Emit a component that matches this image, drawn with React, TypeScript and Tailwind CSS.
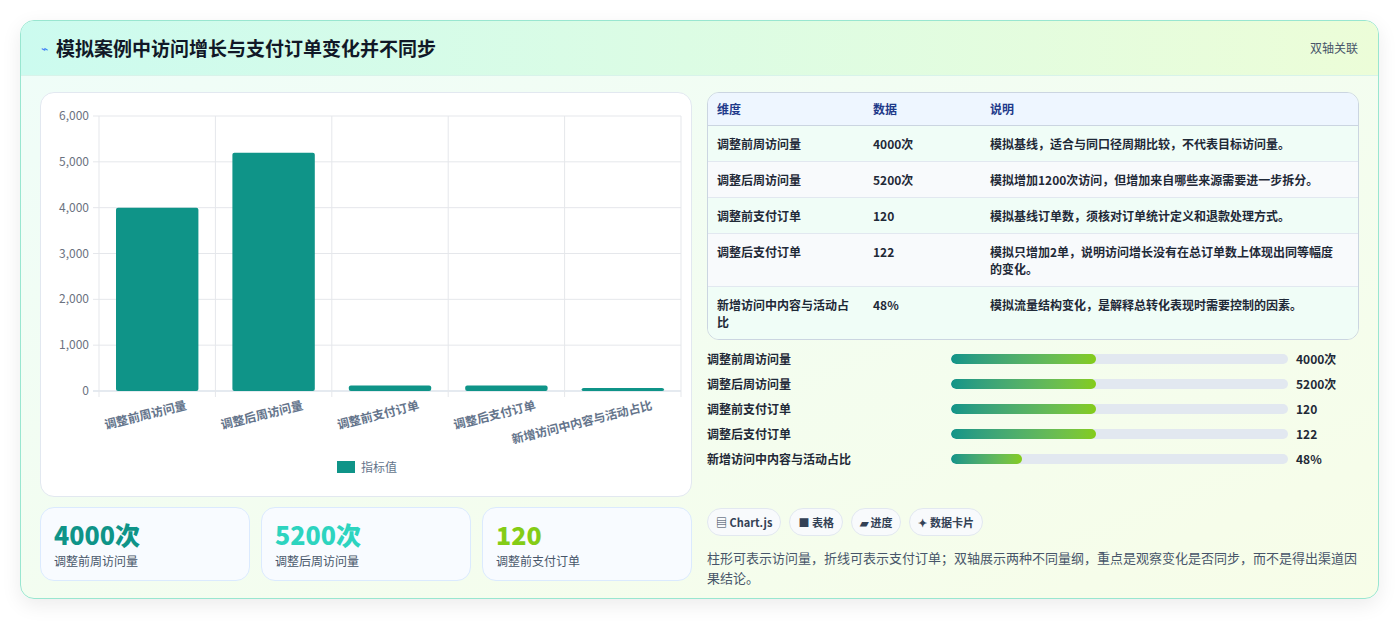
import React from "react";

const F = { fontFamily: '"Noto Sans CJK SC", "Noto Sans", sans-serif' };

const bars = [
  { l: "调整前周访问量", v: 4000 },
  { l: "调整后周访问量", v: 5200 },
  { l: "调整前支付订单", v: 120 },
  { l: "调整后支付订单", v: 122 },
  { l: "新增访问中内容与活动占比", v: 48 },
];

function Chart() {
  const L = 58, R = 640, T = 23, B = 298;
  const cw = (R - L) / 5;
  const y = (v: number) => B - ((B - T) * v) / 6000;
  return (
    <svg width="650" height="402" className="block">
      {[0, 1000, 2000, 3000, 4000, 5000, 6000].map((t) => (
        <g key={t}>
          <line x1={L - 6} x2={R} y1={y(t)} y2={y(t)} stroke={t === 0 ? "#cbd5e1" : "#e5e7eb"} />
          <text x={L - 10} y={y(t) + 4} textAnchor="end" fontSize="12" fill="#6b7280" style={F}>
            {t.toLocaleString("en-US")}
          </text>
        </g>
      ))}
      {[0, 1, 2, 3, 4, 5].map((i) => (
        <line key={i} x1={L + i * cw} x2={L + i * cw} y1={T} y2={B + 6} stroke="#e5e7eb" />
      ))}
      {bars.map((b, i) => {
        const x = L + i * cw + 17;
        const h = Math.max(B - y(b.v), 3);
        return (
          <g key={i}>
            <rect x={x} y={B - h} width={cw - 34} height={h} rx="2" fill="#0f9488" />
            <text
              x={L + i * cw + cw / 2 + 30}
              y={B + 18}
              textAnchor="end"
              fontSize="12"
              fontWeight="700"
              fill="#64748b"
              transform={`rotate(-14 ${L + i * cw + cw / 2 + 30} ${B + 18})`}
              style={F}
            >
              {b.l}
            </text>
          </g>
        );
      })}
      <rect x="296" y="368" width="18" height="12" fill="#0f9488" />
      <text x="320" y="379" fontSize="12" fill="#64748b" style={F}>指标值</text>
    </svg>
  );
}

const rows = [
  ["调整前周访问量", "4000次", "模拟基线，适合与同口径周期比较，不代表目标访问量。"],
  ["调整后周访问量", "5200次", "模拟增加1200次访问，但增加来自哪些来源需要进一步拆分。"],
  ["调整前支付订单", "120", "模拟基线订单数，须核对订单统计定义和退款处理方式。"],
  ["调整后支付订单", "122", "模拟只增加2单，说明访问增长没有在总订单数上体现出同等幅度的变化。"],
  ["新增访问中内容与活动占比", "48%", "模拟流量结构变化，是解释总转化表现时需要控制的因素。"],
];

const prog = [
  ["调整前周访问量", 43, "4000次"],
  ["调整后周访问量", 43, "5200次"],
  ["调整前支付订单", 43, "120"],
  ["调整后支付订单", 43, "122"],
  ["新增访问中内容与活动占比", 21, "48%"],
] as const;

export default function App() {
  return (
    <div className="w-[1399px] h-[621px] bg-white p-[20px]" style={F}>
      <div className="w-[1359px] h-[579px] rounded-[14px] border border-[#99e6d0] overflow-hidden bg-gradient-to-br from-[#effdf9] to-[#f7fde8] shadow-[0_6px_20px_rgba(0,0,0,0.08)] flex flex-col">
        <div className="h-[55px] shrink-0 flex items-center justify-between px-[20px] bg-gradient-to-r from-[#ccfbef] to-[#ecfdd8] border-b border-[#d8f3ea]">
          <div className="flex items-center gap-[8px]">
            <span className="text-[#3b82f6] text-[12px]">⌁</span>
            <span className="text-[19px] font-bold text-[#111827]">模拟案例中访问增长与支付订单变化并不同步</span>
          </div>
          <span className="text-[12px] text-[#475569]">双轴关联</span>
        </div>
        <div className="flex gap-[15px] px-[19px] pt-[16px]">
          <div className="w-[653px] flex flex-col gap-[10px]">
            <div className="h-[405px] bg-white rounded-[14px] border border-[#e2e8f0]">
              <Chart />
            </div>
            <div className="grid grid-cols-3 gap-[11px]">
              {[
                ["4000次", "text-[#0f9488]", "调整前周访问量"],
                ["5200次", "text-[#2dd4bf]", "调整后周访问量"],
                ["120", "text-[#84cc16]", "调整前支付订单"],
              ].map(([v, c, l]) => (
                <div key={l} className="h-[74px] rounded-[14px] border border-[#dbeafe] bg-[#f8fbff] px-[13px] pt-[10px]">
                  <div className={`text-[25px] font-extrabold leading-[32px] ${c}`}>{v}</div>
                  <div className="text-[12px] text-[#475569] mt-[2px]">{l}</div>
                </div>
              ))}
            </div>
          </div>
          <div className="w-[653px] flex flex-col">
            <div className="rounded-[12px] border border-[#cbd5e1] overflow-hidden text-[12px]">
              <div className="flex h-[33px] items-center bg-[#eef6ff] border-b border-[#cbd5e1] font-bold text-[#1e3a8a]">
                <div className="w-[156px] pl-[9px]">维度</div>
                <div className="w-[117px] pl-[9px]">数据</div>
                <div className="flex-1 pl-[9px]">说明</div>
              </div>
              {rows.map((r, i) => (
                <div key={i} className={`flex py-[9px] font-bold text-[#1f2937] leading-[17px] ${i % 2 ? "bg-[#f8fafc]" : "bg-[#f0fdf7]"} ${i < 4 ? "border-b border-[#e2e8f0]" : ""}`}>
                  <div className="w-[156px] pl-[9px] pr-[10px]">{r[0]}</div>
                  <div className="w-[117px] pl-[9px]">{r[1]}</div>
                  <div className="flex-1 pl-[9px] pr-[20px]">{r[2]}</div>
                </div>
              ))}
            </div>
            <div className="mt-[10px] flex flex-col gap-[7px]">
              {prog.map(([l, p, v]) => (
                <div key={l} className="flex items-center h-[18px] text-[12px] font-bold text-[#1f2937]">
                  <div className="w-[244px]">{l}</div>
                  <div className="w-[337px] h-[10px] rounded-full bg-[#e2e8f0] overflow-hidden">
                    <div className="h-full rounded-full bg-gradient-to-r from-[#0f9488] to-[#84cc16]" style={{ width: `${p}%` }} />
                  </div>
                  <div className="ml-[8px]">{v}</div>
                </div>
              ))}
            </div>
            <div className="flex gap-[8px] mt-[40px]">
              {["▤ Chart.js", "■ 表格", "▰ 进度", "✦ 数据卡片"].map((c) => (
                <div key={c} className="h-[28px] px-[8px] rounded-full border border-[#e2e8f0] bg-[#f8fafc] flex items-center text-[11px] font-bold text-[#334155]">{c}</div>
              ))}
            </div>
            <div className="mt-[12px] text-[13px] leading-[20px] text-[#475569]">
              柱形可表示访问量，折线可表示支付订单；双轴展示两种不同量纲，重点是观察变化是否同步，而不是得出渠道因果结论。
            </div>
          </div>
        </div>
      </div>
    </div>
  );
}
